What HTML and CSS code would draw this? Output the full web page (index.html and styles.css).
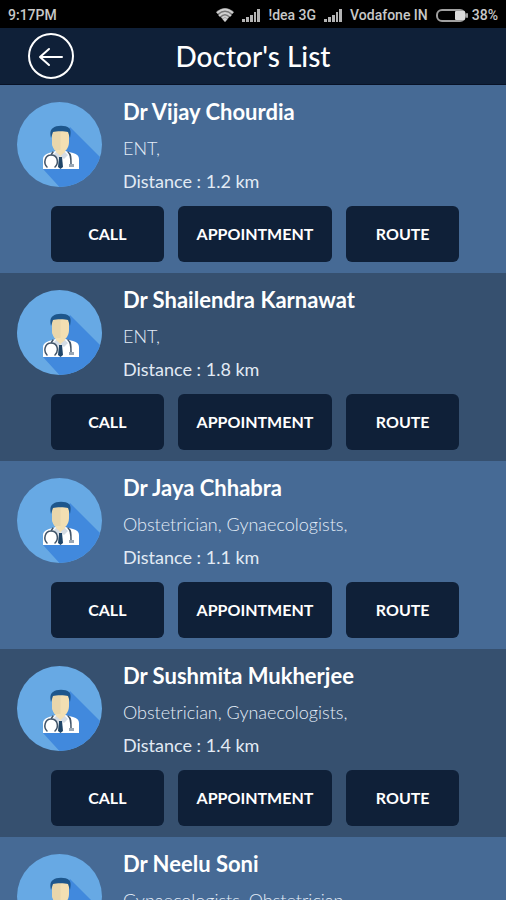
FILE: index.html
```html
<!DOCTYPE html>
<html lang="en">
<head>
<meta charset="utf-8">
<meta name="viewport" content="width=device-width, initial-scale=1">
<title>Doctor's List</title>
<link rel="stylesheet" href="styles.css">
</head>
<body>
<svg class="sprite" aria-hidden="true">
  <defs>
    <clipPath id="disc"><circle cx="42.5" cy="42.5" r="42.5"/></clipPath>
    <symbol id="doctor" viewBox="0 0 85 85">
      <circle cx="42.5" cy="42.5" r="42.5" fill="#67a9e4"/>
      <path clip-path="url(#disc)" fill="#4189dd" d="M53 25 L88 60 V90 H47 L26 67 L40 52 Z"/>
      <path fill="#fff" d="M26 67 V57 C26 54 29 52 32 51 L39 49 H48 L56 51 C60 52 62 54 62 57 V67 Z"/>
      <path fill="#f3dfb2" d="M35 29 H52 V40 C52 46 48 51 43.500 51 C39 51 35 46 35 40 Z"/>
      <path fill="#e8d6ab" d="M35 29 H43.500 V51 C39 51 35 46 35 40 Z"/>
      <path fill="#f3dfb2" d="M39 48 H48 V51 L43.500 55 L39 51 Z"/>
      <path fill="#1d568c" d="M34 36 C33 31 33 28 36 26 C39 23 49 23 52 26 C54 28 54 31 53 36 L51 30 C48 29 39 29 36 30 Z"/>
      <path fill="#d4dce4" d="M39 50 L36 53 L40 57 L43.500 54 L47 57 L51 53 L48 50 L43.500 54 Z"/>
      <path fill="#1f4568" d="M42 55 H45 L46 65 L43.500 67 L41 65 Z"/>
      <g fill="none" stroke="#43566a" stroke-width="1.500" stroke-linecap="round">
        <path d="M36 50 L34 53 M30 65 C26 61 28 53 34 53 C41 53 42 61 38 65"/>
        <path d="M51 50 C54 52 54 56 54 62"/>
      </g>
      <path fill="#9aa7b4" d="M52 62 H57 V65 H52 Z"/>
    </symbol>
    <symbol id="signal" viewBox="0 0 18 13">
      <path fill="#b4b4b4" d="M0 10h3v3H0zM4 8h3v5H4zM8 6h3v7H8zM12 3h2v10h-2zM15 0h3v13h-3z"/>
    </symbol>
  </defs>
</svg>

<div class="screen">
  <div class="status">
    <span class="clock">9:17PM</span>
    <svg class="wifi" viewBox="0 0 18 14" aria-hidden="true">
      <path fill="#777" d="M0 4 Q9 -4 18 4 L9 14 Z"/>
      <g fill="none" stroke="#d0d0d0" stroke-width="2">
        <path d="M1 5 Q9 -2 17 5M3 8 Q9 2 15 8M6 10 Q9 7 12 10"/>
      </g>
      <path fill="#d0d0d0" d="M6.500 11 Q9 9 11.500 11 L9 14Z"/>
    </svg>
    <svg class="signal" aria-hidden="true"><use href="#signal"/></svg>
    <span>!dea 3G</span>
    <svg class="signal" aria-hidden="true"><use href="#signal"/></svg>
    <span>Vodafone IN</span>
    <span class="power">
      <svg class="battery" viewBox="0 0 32 13" aria-hidden="true">
        <rect x="1" y="1" width="28" height="11" rx="5" fill="none" stroke="#a0a0a0" stroke-width="2"/>
        <rect x="19" y="2" width="10" height="9" rx="1" fill="#dcdcdc"/>
        <rect x="30" y="4" width="2" height="5" rx="1" fill="#a0a0a0"/>
      </svg>
      <span>38%</span>
    </span>
  </div>

  <header class="bar">
    <button class="back" type="button" aria-label="Back">
      <svg viewBox="0 0 48 48" aria-hidden="true">
        <g fill="none" stroke="#fff" stroke-width="2" stroke-linecap="round" stroke-linejoin="round">
          <circle cx="24" cy="24" r="22"/>
          <path d="M35 25H13M22 17L13 25L22 33"/>
        </g>
      </svg>
    </button>
    <h1 class="title">Doctor's List</h1>
  </header>

  <main class="list">
    <article class="doctor">
      <div class="summary">
        <svg class="avatar" aria-hidden="true"><use href="#doctor"/></svg>
        <div class="details">
          <h2 class="name">Dr Vijay Chourdia</h2>
          <p class="field">ENT,</p>
          <p class="distance">Distance : 1.2 km</p>
        </div>
      </div>
      <div class="actions">
        <button class="action" type="button">CALL</button>
        <button class="action" type="button">APPOINTMENT</button>
        <button class="action" type="button">ROUTE</button>
      </div>
    </article>
    <article class="doctor">
      <div class="summary">
        <svg class="avatar" aria-hidden="true"><use href="#doctor"/></svg>
        <div class="details">
          <h2 class="name">Dr Shailendra Karnawat</h2>
          <p class="field">ENT,</p>
          <p class="distance">Distance : 1.8 km</p>
        </div>
      </div>
      <div class="actions">
        <button class="action" type="button">CALL</button>
        <button class="action" type="button">APPOINTMENT</button>
        <button class="action" type="button">ROUTE</button>
      </div>
    </article>
    <article class="doctor">
      <div class="summary">
        <svg class="avatar" aria-hidden="true"><use href="#doctor"/></svg>
        <div class="details">
          <h2 class="name">Dr Jaya Chhabra</h2>
          <p class="field">Obstetrician, Gynaecologists,</p>
          <p class="distance">Distance : 1.1 km</p>
        </div>
      </div>
      <div class="actions">
        <button class="action" type="button">CALL</button>
        <button class="action" type="button">APPOINTMENT</button>
        <button class="action" type="button">ROUTE</button>
      </div>
    </article>
    <article class="doctor">
      <div class="summary">
        <svg class="avatar" aria-hidden="true"><use href="#doctor"/></svg>
        <div class="details">
          <h2 class="name">Dr Sushmita Mukherjee</h2>
          <p class="field">Obstetrician, Gynaecologists,</p>
          <p class="distance">Distance : 1.4 km</p>
        </div>
      </div>
      <div class="actions">
        <button class="action" type="button">CALL</button>
        <button class="action" type="button">APPOINTMENT</button>
        <button class="action" type="button">ROUTE</button>
      </div>
    </article>
    <article class="doctor">
      <div class="summary">
        <svg class="avatar" aria-hidden="true"><use href="#doctor"/></svg>
        <div class="details">
          <h2 class="name">Dr Neelu Soni</h2>
          <p class="field">Gynaecologists, Obstetrician</p>
        </div>
      </div>
    </article>
  </main>
</div>
</body>
</html>
```

FILE: styles.css
```css
* {
  box-sizing: border-box;
}

body {
  margin: 0;
  background: #466a95;
  color: #fff;
  font-family: Lato, "Open Sans", sans-serif;
}

h1, h2, p {
  margin: 0;
}

button {
  border: 0;
  padding: 0;
  color: inherit;
  font-family: inherit;
  cursor: pointer;
}

.sprite {
  position: absolute;
  width: 0;
  height: 0;
}

.screen {
  display: flex;
  flex-direction: column;
  height: 100vh;
}

.status {
  display: flex;
  align-items: center;
  gap: 8px;
  padding: 7px 8px 5px;
  background: #000;
  color: #c8c8c8;
  font: 500 14px/16px Roboto, sans-serif;
  white-space: nowrap;
}

.clock {
  margin-right: auto;
}

.wifi {
  width: 18px;
  height: 14px;
}

.signal {
  width: 18px;
  height: 13px;
}

.power {
  display: flex;
  align-items: center;
  gap: 4px;
}

.battery {
  width: 32px;
  height: 13px;
}

.bar {
  display: grid;
  grid-template-columns: 48px 1fr 48px;
  align-items: center;
  padding: 4px 27px;
  border-bottom: 1px solid #081226;
  background: #0f2038;
}

.back {
  height: 48px;
  background: none;
}

.back svg {
  display: block;
  width: 48px;
  height: 48px;
}

.title {
  font-size: 28px;
  line-height: 36px;
  font-weight: 500;
  text-align: center;
}

.list {
  flex: 1;
  min-height: 0;
  overflow-y: auto;
  scrollbar-width: none;
}

.doctor {
  min-height: 188px;
  padding: 13px 0 11px;
  background: #466a95;
}

.doctor:nth-child(even) {
  background: #36506f;
}

.summary {
  display: flex;
  gap: 21px;
  padding: 0 17px;
}

.avatar {
  flex: none;
  width: 85px;
  height: 85px;
  margin-top: 4px;
}

.name {
  margin-bottom: 8px;
  font-size: 22px;
  line-height: 28px;
  font-weight: 700;
}

.field,
.distance {
  font-size: 18px;
  line-height: 28px;
}

.field {
  margin-bottom: 5px;
  color: #e4edf8;
  font-weight: 300;
}

.distance {
  color: #e2eaf4;
}

.actions {
  display: grid;
  grid-template-columns: 112fr 154fr 112fr;
  gap: 14px;
  margin-top: 11px;
  padding: 0 47px 0 51px;
}

.action {
  height: 56px;
  border-radius: 6px;
  background: #0f2038;
  font-size: 16px;
  line-height: 24px;
  font-weight: 700;
}
```
